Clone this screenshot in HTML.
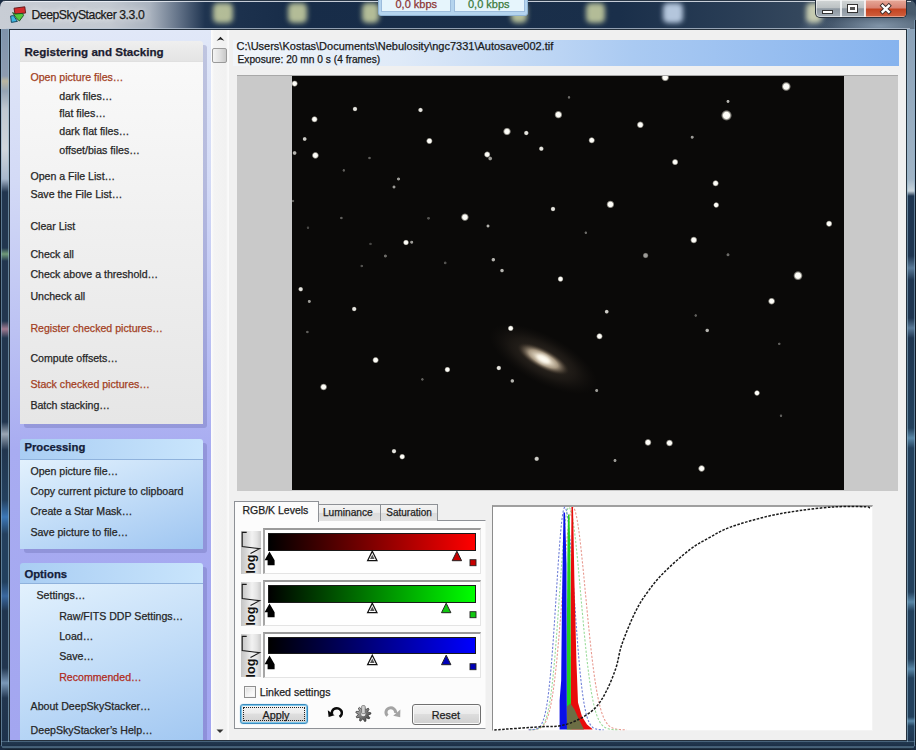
<!DOCTYPE html>
<html><head><meta charset="utf-8">
<style>
*{margin:0;padding:0;box-sizing:border-box}
html,body{width:916px;height:750px;overflow:hidden}
body{position:relative;background:#1b2c44;font-family:"Liberation Sans",sans-serif;font-size:11px;color:#1e1e1e}
.a{position:absolute}
.t{position:absolute;white-space:nowrap;line-height:1;-webkit-text-stroke:0.25px currentColor}
</style></head>
<body>
<div class="a" style="left:0;top:0;width:916px;height:750px;background:#1a2b42"></div>
<div class="a" style="left:9px;top:29px;width:898px;height:712px;background:#f0f0f0;border:1px solid #1f2d3a"></div>
<div class="a" style="left:10px;top:30px;width:201px;height:710px;background:linear-gradient(180deg,#e1e8f8 0,#d3daf6 150px,#bcc2f3 300px,#a8acf1 420px,#a3a6f0 100%)"></div>
<div class="a" style="left:24px;top:45px;width:183px;height:383px;background:rgba(60,60,130,0.2);border-radius:3px"></div>
<div class="a" style="left:20px;top:41px;width:183px;height:20px;background:linear-gradient(180deg,#efefef,#e4e4e4);border-radius:3px 3px 0 0"></div>
<div class="a" style="left:20px;top:61px;width:183px;height:363px;background:linear-gradient(180deg,#f9f9f9 0,#efefef 50%,#e6e6e6 100%);border-top:1px solid #e0e0e0"></div>
<div class="a" style="left:24px;top:443px;width:183px;height:110px;background:rgba(60,60,130,0.2);border-radius:3px"></div>
<div class="a" style="left:20px;top:439px;width:183px;height:20px;background:linear-gradient(90deg,#a9cdf3,#c9e5fc);border-radius:3px 3px 0 0"></div>
<div class="a" style="left:20px;top:459px;width:183px;height:90px;background:linear-gradient(160deg,#e2f1fd 0,#c4def8 45%,#9ec5f1 100%);border-top:1px solid #8fb2dc"></div>
<div class="a" style="left:24px;top:567px;width:183px;height:190px;background:rgba(60,60,130,0.2);border-radius:3px"></div>
<div class="a" style="left:20px;top:563px;width:183px;height:20px;background:linear-gradient(90deg,#a9cdf3,#c9e5fc);border-radius:3px 3px 0 0"></div>
<div class="a" style="left:20px;top:583px;width:183px;height:170px;background:linear-gradient(160deg,#e2f1fd 0,#c4def8 45%,#9ec5f1 100%);border-top:1px solid #8fb2dc"></div>
<div class="a" style="left:9px;top:740px;width:898px;height:1px;background:#1f2d3a"></div>
<div class="t" style="left:24.4px;top:46.08px;font-size:11.6px;font-weight:bold;color:#1c1c30;">Registering and Stacking</div>
<div class="t" style="left:30.4px;top:72.43px;font-size:10.6px;color:#a33f1f;">Open picture files…</div>
<div class="t" style="left:59.3px;top:90.63px;font-size:10.6px;color:#262626;">dark files…</div>
<div class="t" style="left:59.3px;top:108.43px;font-size:10.6px;color:#262626;">flat files…</div>
<div class="t" style="left:59.3px;top:126.43px;font-size:10.6px;color:#262626;">dark flat files…</div>
<div class="t" style="left:59.3px;top:145.03px;font-size:10.6px;color:#262626;">offset/bias files…</div>
<div class="t" style="left:30.4px;top:170.63px;font-size:10.6px;color:#262626;">Open a File List…</div>
<div class="t" style="left:30.4px;top:188.63px;font-size:10.6px;color:#262626;">Save the File List…</div>
<div class="t" style="left:30.4px;top:220.63px;font-size:10.6px;color:#262626;">Clear List</div>
<div class="t" style="left:30.4px;top:249.23px;font-size:10.6px;color:#262626;">Check all</div>
<div class="t" style="left:30.4px;top:268.83px;font-size:10.6px;color:#262626;">Check above a threshold…</div>
<div class="t" style="left:30.4px;top:291.23px;font-size:10.6px;color:#262626;">Uncheck all</div>
<div class="t" style="left:30.4px;top:323.43px;font-size:10.6px;color:#a33f1f;">Register checked pictures…</div>
<div class="t" style="left:30.4px;top:352.83px;font-size:10.6px;color:#262626;">Compute offsets…</div>
<div class="t" style="left:30.4px;top:379.43px;font-size:10.6px;color:#a33f1f;">Stack checked pictures…</div>
<div class="t" style="left:30.4px;top:399.63px;font-size:10.6px;color:#262626;">Batch stacking…</div>
<div class="t" style="left:30.4px;top:465.83px;font-size:10.6px;color:#262626;">Open picture file…</div>
<div class="t" style="left:30.4px;top:486.03px;font-size:10.6px;color:#262626;">Copy current picture to clipboard</div>
<div class="t" style="left:30.4px;top:506.33px;font-size:10.6px;color:#262626;">Create a Star Mask…</div>
<div class="t" style="left:30.4px;top:527.03px;font-size:10.6px;color:#262626;">Save picture to file…</div>
<div class="t" style="left:36.5px;top:589.73px;font-size:10.6px;color:#262626;">Settings…</div>
<div class="t" style="left:59.2px;top:610.63px;font-size:10.6px;color:#262626;">Raw/FITS DDP Settings…</div>
<div class="t" style="left:59.2px;top:630.83px;font-size:10.6px;color:#262626;">Load…</div>
<div class="t" style="left:59.2px;top:651.33px;font-size:10.6px;color:#262626;">Save…</div>
<div class="t" style="left:59.2px;top:671.53px;font-size:10.6px;color:#b02a20;">Recommended…</div>
<div class="t" style="left:30.6px;top:700.83px;font-size:10.6px;color:#262626;">About DeepSkyStacker…</div>
<div class="t" style="left:30.6px;top:725.03px;font-size:10.6px;color:#262626;">DeepSkyStacker’s Help…</div>
<div class="t" style="left:24.4px;top:442.43px;font-size:11.3px;font-weight:bold;color:#14203a;">Processing</div>
<div class="t" style="left:24.4px;top:568.83px;font-size:11.3px;font-weight:bold;color:#14203a;">Options</div>
<div class="a" style="left:211px;top:30px;width:18px;height:710px;background:linear-gradient(90deg,#fdfdfd 0,#f4f4f4 3px,#f1f1f1 15px,#fafafa 17px)"></div>
<svg class="a" style="left:211px;top:30px" width="18" height="710"><path d="M216.6 40.8 L220.5 36.8 L224.4 40.8 L220.5 39.4 Z" transform="translate(-211,-30)" fill="#1e1e1e"/><path d="M216.5 729.5 L220 733 L223.5 729.5 Z" transform="translate(-211,-30)" fill="#333"/></svg>
<div class="a" style="left:212px;top:48px;width:15px;height:15px;border:1px solid #9a9a9a;border-radius:2px;background:linear-gradient(90deg,#f4f4f4 0,#e2e2e2 50%,#c8c8c8 100%)"></div>
<div class="a" style="left:233px;top:40px;width:666px;height:26px;background:linear-gradient(90deg,#f1f5fa 0,#dfeaf8 25%,#aacaf2 60%,#86b3ee 100%)"></div>
<div class="t" style="left:236.6px;top:41.49px;font-size:11px;color:#1a1a1a;">C:\Users\Kostas\Documents\Nebulosity\ngc7331\Autosave002.tif</div>
<div class="t" style="left:237.5px;top:55.07px;font-size:10.2px;color:#1a1a1a;">Exposure: 20 mn 0 s (4 frames)</div>
<div class="a" style="left:237px;top:75px;width:661px;height:416px;background:#c9c9c9;border-top:1px solid #a8a8a8"></div>
<svg class="a" style="left:292px;top:76px" width="552" height="414" viewBox="292 76 552 414">
<defs><radialGradient id="st"><stop offset="0" stop-color="#ffffff"/><stop offset="0.55" stop-color="#fbfaf2"/><stop offset="1" stop-color="#f4f0e4" stop-opacity="0"/></radialGradient>
<radialGradient id="gx"><stop offset="0" stop-color="#fffaf0"/><stop offset="0.2" stop-color="#f0e6d2"/><stop offset="0.55" stop-color="#b4a48c" stop-opacity="0.9"/><stop offset="0.8" stop-color="#5a4e40" stop-opacity="0.6"/><stop offset="1" stop-color="#2a241c" stop-opacity="0"/></radialGradient>
<radialGradient id="gh"><stop offset="0" stop-color="#4a4036" stop-opacity="0.9"/><stop offset="0.6" stop-color="#2a241e" stop-opacity="0.6"/><stop offset="1" stop-color="#1a1612" stop-opacity="0"/></radialGradient>
<filter id="bl" x="-50%" y="-50%" width="200%" height="200%"><feGaussianBlur stdDeviation="1.5"/></filter></defs>
<rect x="292" y="76" width="552" height="414" fill="#0a0908"/>
<g transform="translate(543.3 359) rotate(28)"><ellipse rx="60" ry="24" fill="url(#gh)" opacity="0.9"/><ellipse rx="29" ry="10" fill="url(#gx)"/><ellipse rx="7" ry="4" fill="#fffef8" opacity="0.6" filter="url(#bl)"/></g>
<circle cx="294.6" cy="83.6" r="3.40" fill="url(#st)" opacity="1"/><circle cx="314.5" cy="119.3" r="3.40" fill="url(#st)" opacity="1"/><circle cx="355" cy="109" r="2.67" fill="url(#st)" opacity="0.9"/><circle cx="420.5" cy="110" r="2.67" fill="url(#st)" opacity="0.9"/><circle cx="304.7" cy="139" r="2.38" fill="url(#st)" opacity="0.8"/><circle cx="315.4" cy="155.4" r="3.69" fill="url(#st)" opacity="1"/><circle cx="294.6" cy="153" r="2.38" fill="url(#st)" opacity="0.7"/><circle cx="429.4" cy="141" r="3.40" fill="url(#st)" opacity="1"/><circle cx="507" cy="131.5" r="4.12" fill="url(#st)" opacity="1"/><circle cx="526.3" cy="133" r="2.67" fill="url(#st)" opacity="0.9"/><circle cx="558.4" cy="114.7" r="4.12" fill="url(#st)" opacity="1"/><circle cx="541.3" cy="148.7" r="2.67" fill="url(#st)" opacity="0.9"/><circle cx="487.2" cy="154.5" r="3.40" fill="url(#st)" opacity="1"/><circle cx="490.2" cy="158.5" r="2.38" fill="url(#st)" opacity="0.6"/><circle cx="398.5" cy="179" r="1.95" fill="url(#st)" opacity="0.6"/><circle cx="394" cy="187" r="1.95" fill="url(#st)" opacity="0.6"/><circle cx="369.5" cy="158" r="1.66" fill="url(#st)" opacity="0.35"/><circle cx="343.8" cy="170.4" r="1.66" fill="url(#st)" opacity="0.35"/><circle cx="464.9" cy="217.2" r="4.12" fill="url(#st)" opacity="1"/><circle cx="553" cy="209" r="2.67" fill="url(#st)" opacity="0.9"/><circle cx="488" cy="226" r="1.95" fill="url(#st)" opacity="0.7"/><circle cx="406" cy="242.5" r="3.11" fill="url(#st)" opacity="1"/><circle cx="411.7" cy="242.2" r="1.95" fill="url(#st)" opacity="0.6"/><circle cx="385.4" cy="256" r="1.95" fill="url(#st)" opacity="0.4"/><circle cx="493.3" cy="259.7" r="2.24" fill="url(#st)" opacity="0.7"/><circle cx="502" cy="270.6" r="2.24" fill="url(#st)" opacity="0.7"/><circle cx="560.5" cy="279" r="3.11" fill="url(#st)" opacity="1"/><circle cx="341.4" cy="218" r="1.66" fill="url(#st)" opacity="0.35"/><circle cx="293" cy="201" r="1.66" fill="url(#st)" opacity="0.35"/><circle cx="665.2" cy="77.5" r="4.12" fill="url(#st)" opacity="1"/><circle cx="786.2" cy="86.5" r="4.85" fill="url(#st)" opacity="1"/><circle cx="728" cy="101.4" r="1.95" fill="url(#st)" opacity="0.7"/><circle cx="726.5" cy="115.4" r="5.58" fill="url(#st)" opacity="1"/><circle cx="640.3" cy="124.8" r="3.69" fill="url(#st)" opacity="1"/><circle cx="591.7" cy="140.3" r="3.40" fill="url(#st)" opacity="1"/><circle cx="692.2" cy="137.2" r="1.95" fill="url(#st)" opacity="0.6"/><circle cx="675.1" cy="162.1" r="3.40" fill="url(#st)" opacity="1"/><circle cx="715.6" cy="183.3" r="3.40" fill="url(#st)" opacity="1"/><circle cx="716.2" cy="205" r="3.11" fill="url(#st)" opacity="1"/><circle cx="610.4" cy="204.4" r="4.12" fill="url(#st)" opacity="1"/><circle cx="829.1" cy="223.7" r="3.40" fill="url(#st)" opacity="1"/><circle cx="693.8" cy="240" r="3.69" fill="url(#st)" opacity="1"/><circle cx="645.6" cy="255.5" r="3.11" fill="url(#st)" opacity="0.6"/><circle cx="728" cy="254.8" r="1.95" fill="url(#st)" opacity="0.4"/><circle cx="798" cy="275.7" r="4.85" fill="url(#st)" opacity="1"/><circle cx="585.8" cy="232.7" r="1.66" fill="url(#st)" opacity="0.4"/><circle cx="569" cy="97.4" r="1.66" fill="url(#st)" opacity="0.4"/><circle cx="300.7" cy="289.2" r="2.67" fill="url(#st)" opacity="0.9"/><circle cx="309.3" cy="301.4" r="1.95" fill="url(#st)" opacity="0.6"/><circle cx="354.2" cy="309" r="2.67" fill="url(#st)" opacity="0.9"/><circle cx="307.4" cy="332" r="1.66" fill="url(#st)" opacity="0.35"/><circle cx="375.6" cy="360.1" r="3.40" fill="url(#st)" opacity="1"/><circle cx="323.6" cy="387" r="3.69" fill="url(#st)" opacity="1"/><circle cx="447.4" cy="369.6" r="3.11" fill="url(#st)" opacity="1"/><circle cx="422.4" cy="379.4" r="1.66" fill="url(#st)" opacity="0.35"/><circle cx="510.7" cy="328.3" r="3.11" fill="url(#st)" opacity="1"/><circle cx="498.8" cy="368" r="2.67" fill="url(#st)" opacity="0.9"/><circle cx="512.3" cy="380.9" r="2.24" fill="url(#st)" opacity="0.7"/><circle cx="394" cy="451.2" r="2.67" fill="url(#st)" opacity="0.9"/><circle cx="402.2" cy="456.7" r="3.11" fill="url(#st)" opacity="1"/><circle cx="536.7" cy="458.8" r="2.67" fill="url(#st)" opacity="0.8"/><circle cx="771.6" cy="301.2" r="3.69" fill="url(#st)" opacity="1"/><circle cx="606.7" cy="311.7" r="2.38" fill="url(#st)" opacity="0.8"/><circle cx="599.5" cy="336.3" r="3.40" fill="url(#st)" opacity="1"/><circle cx="707.2" cy="330.4" r="2.24" fill="url(#st)" opacity="0.7"/><circle cx="757" cy="393" r="3.11" fill="url(#st)" opacity="1"/><circle cx="596.7" cy="390.5" r="1.95" fill="url(#st)" opacity="0.6"/><circle cx="648" cy="442.4" r="3.69" fill="url(#st)" opacity="1"/><circle cx="669.5" cy="443" r="3.69" fill="url(#st)" opacity="1"/><circle cx="701.6" cy="468.5" r="3.69" fill="url(#st)" opacity="1"/><circle cx="615" cy="460.5" r="1.95" fill="url(#st)" opacity="0.6"/><circle cx="781" cy="415.7" r="1.66" fill="url(#st)" opacity="0.35"/><circle cx="779.3" cy="343.8" r="1.66" fill="url(#st)" opacity="0.35"/><circle cx="695.7" cy="315.5" r="1.66" fill="url(#st)" opacity="0.35"/><circle cx="428.5" cy="218.3" r="1.80" fill="url(#st)" opacity="0.3"/><circle cx="445.2" cy="262.9" r="1.80" fill="url(#st)" opacity="0.3"/><circle cx="361.7" cy="266" r="1.66" fill="url(#st)" opacity="0.3"/><circle cx="308" cy="227.7" r="1.66" fill="url(#st)" opacity="0.25"/><circle cx="370.5" cy="243.9" r="1.66" fill="url(#st)" opacity="0.25"/>
</svg>
<div class="a" style="left:234px;top:520px;width:252px;height:209px;background:#fcfcfc;border:1px solid #8e9196;border-right-color:#f6f6f6"></div>
<div class="a" style="left:318px;top:503.5px;width:63px;height:17px;background:linear-gradient(180deg,#f4f4f4 0,#ebebeb 50%,#dcdcdc 51%,#e2e2e2 100%);border:1px solid #8e9196;border-bottom:none"></div>
<div class="a" style="left:380px;top:503.5px;width:57.5px;height:17px;background:linear-gradient(180deg,#f4f4f4 0,#ebebeb 50%,#dcdcdc 51%,#e2e2e2 100%);border:1px solid #8e9196;border-bottom:none"></div>
<div class="a" style="left:234px;top:501px;width:85px;height:21px;background:#fcfcfc;border:1px solid #8e9196;border-bottom:none"></div>
<div class="t" style="left:242.4px;top:505.31px;font-size:10.5px;color:#1e1e1e;">RGB/K Levels</div>
<div class="t" style="left:322.9px;top:508.17px;font-size:10.2px;color:#1e1e1e;">Luminance</div>
<div class="t" style="left:386.3px;top:508.33px;font-size:10.0px;color:#1e1e1e;">Saturation</div>
<div class="a" style="left:241px;top:530.5px;width:20px;height:43.5px;background:linear-gradient(90deg,#c4c4c4 0,#d6d6d6 25%,#f2f2f2 55%,#e2e2e2 80%,#c8c8c8 100%)"></div>
<svg class="a" style="left:236px;top:526.2px" width="30" height="52" viewBox="236 526.2 30 52"><path d="M246.7 532.6 L242.2 532.6 L242.2 546.8 L259.6 548.9 L250.5 553.7" fill="none" stroke="#1a1a1a" stroke-width="1.1"/><text transform="translate(254.6 573.6) rotate(-90)" font-family="Liberation Sans" font-weight="bold" font-size="12.6" fill="#111">log</text></svg>
<div class="a" style="left:262.5px;top:528.2px;width:218.5px;height:46.3px;background:#fff;border-top:2px solid #9a9a9a;border-left:2px solid #a6a6a6;border-right:1px solid #e4e4e4;border-bottom:1px solid #e4e4e4"></div>
<div class="a" style="left:268px;top:533.3px;width:208.2px;height:17.5px;background:linear-gradient(90deg,#000 0,#ff0000 100%);border:1px solid #1a1a1a"></div>
<svg class="a" style="left:262px;top:528.2px" width="220" height="46" viewBox="262 528.2 220 46"><path d="M269.5 551.7 L274.6 560.5 L274.6 565.5 L267.6 565.5 L267.6 560.5 L264.6 560.5 Z" fill="#000"/><path d="M372.3 551.4 L377 560.9 L367.6 560.9 Z" fill="#fff" stroke="#111" stroke-width="1.2"/><path d="M372.3 554.7 L374.6 559.1 L370 559.1 Z" fill="#555"/><path d="M456.9 551.4 L461.59999999999997 560.9 L452.2 560.9 Z" fill="#c80000" stroke="#222" stroke-width="1"/><rect x="470" y="559.9" width="6" height="6" fill="#c80000" stroke="#222" stroke-width="0.9"/></svg>
<div class="a" style="left:241px;top:582.2px;width:20px;height:43.5px;background:linear-gradient(90deg,#c4c4c4 0,#d6d6d6 25%,#f2f2f2 55%,#e2e2e2 80%,#c8c8c8 100%)"></div>
<svg class="a" style="left:236px;top:577.9px" width="30" height="52" viewBox="236 577.9 30 52"><path d="M246.7 584.3 L242.2 584.3 L242.2 598.5 L259.6 600.6 L250.5 605.4" fill="none" stroke="#1a1a1a" stroke-width="1.1"/><text transform="translate(254.6 625.3) rotate(-90)" font-family="Liberation Sans" font-weight="bold" font-size="12.6" fill="#111">log</text></svg>
<div class="a" style="left:262.5px;top:579.9px;width:218.5px;height:46.3px;background:#fff;border-top:2px solid #9a9a9a;border-left:2px solid #a6a6a6;border-right:1px solid #e4e4e4;border-bottom:1px solid #e4e4e4"></div>
<div class="a" style="left:268px;top:585.0px;width:208.2px;height:17.5px;background:linear-gradient(90deg,#000 0,#00ff00 100%);border:1px solid #1a1a1a"></div>
<svg class="a" style="left:262px;top:579.9px" width="220" height="46" viewBox="262 579.9 220 46"><path d="M269.5 603.4 L274.6 612.2 L274.6 617.2 L267.6 617.2 L267.6 612.2 L264.6 612.2 Z" fill="#000"/><path d="M372.3 603.1 L377 612.6 L367.6 612.6 Z" fill="#fff" stroke="#111" stroke-width="1.2"/><path d="M372.3 606.4 L374.6 610.8 L370 610.8 Z" fill="#555"/><path d="M446.2 603.1 L450.9 612.6 L441.5 612.6 Z" fill="#10c810" stroke="#222" stroke-width="1"/><rect x="470" y="611.6" width="6" height="6" fill="#10c810" stroke="#222" stroke-width="0.9"/></svg>
<div class="a" style="left:241px;top:633.9px;width:20px;height:43.5px;background:linear-gradient(90deg,#c4c4c4 0,#d6d6d6 25%,#f2f2f2 55%,#e2e2e2 80%,#c8c8c8 100%)"></div>
<svg class="a" style="left:236px;top:629.6px" width="30" height="52" viewBox="236 629.6 30 52"><path d="M246.7 636.0 L242.2 636.0 L242.2 650.2 L259.6 652.3 L250.5 657.1" fill="none" stroke="#1a1a1a" stroke-width="1.1"/><text transform="translate(254.6 677.0) rotate(-90)" font-family="Liberation Sans" font-weight="bold" font-size="12.6" fill="#111">log</text></svg>
<div class="a" style="left:262.5px;top:631.6px;width:218.5px;height:46.3px;background:#fff;border-top:2px solid #9a9a9a;border-left:2px solid #a6a6a6;border-right:1px solid #e4e4e4;border-bottom:1px solid #e4e4e4"></div>
<div class="a" style="left:268px;top:636.7px;width:208.2px;height:17.5px;background:linear-gradient(90deg,#000 0,#0000ff 100%);border:1px solid #1a1a1a"></div>
<svg class="a" style="left:262px;top:631.6px" width="220" height="46" viewBox="262 631.6 220 46"><path d="M269.5 655.1 L274.6 663.9 L274.6 668.9 L267.6 668.9 L267.6 663.9 L264.6 663.9 Z" fill="#000"/><path d="M372.3 654.8 L377 664.3 L367.6 664.3 Z" fill="#fff" stroke="#111" stroke-width="1.2"/><path d="M372.3 658.1 L374.6 662.5 L370 662.5 Z" fill="#555"/><path d="M446.2 654.8 L450.9 664.3 L441.5 664.3 Z" fill="#0000b8" stroke="#222" stroke-width="1"/><rect x="470" y="663.3" width="6" height="6" fill="#0000b8" stroke="#222" stroke-width="0.9"/></svg>
<div class="a" style="left:243.5px;top:685.8px;width:12.5px;height:12.5px;border:1px solid #8f8f8f;background:linear-gradient(135deg,#dcdcdc 0,#f6f6f6 60%,#ffffff 100%);box-shadow:inset 0 0 0 1px #f4f4f4"></div>
<div class="t" style="left:259.8px;top:686.93px;font-size:10.6px;color:#1e1e1e;">Linked settings</div>
<div class="a" style="left:240px;top:704.4px;width:68px;height:20px;border:1px solid #3a8cbf;border-radius:3px;background:linear-gradient(180deg,#f4f4f4 0,#ececec 45%,#dedede 50%,#d2d2d2 100%);box-shadow:inset 0 0 0 1px #7cc6ea,0 0 1px #5ab0e0"></div>
<div class="a" style="left:243px;top:707.4px;width:62px;height:14px;border:1px dotted #202020"></div>
<div class="t" style="left:262.5px;top:709.66px;font-size:10.8px;color:#1e1e1e;">Apply</div>
<div class="a" style="left:411.5px;top:704.4px;width:69px;height:20.3px;border:1px solid #707070;border-radius:3px;background:linear-gradient(180deg,#f2f2f2 0,#ebebeb 45%,#dddddd 50%,#cfcfcf 100%);box-shadow:inset 0 0 0 1px #fafafa"></div>
<div class="t" style="left:431.8px;top:709.66px;font-size:10.8px;color:#1e1e1e;">Reset</div>
<svg class="a" style="left:322px;top:700px" width="84" height="28" viewBox="322 700 84 28"><path d="M332 714 A5 4.6 0 1 1 339.5 716.8" fill="none" stroke="#0a0a0a" stroke-width="2.6"/><path d="M327.8 710.2 L328.6 717 L334.6 715.2 Z" fill="#0a0a0a"/><defs><linearGradient id="gg" x1="0" y1="0" x2="1" y2="1"><stop offset="0" stop-color="#c8c8c8"/><stop offset="0.5" stop-color="#7a7a7a"/><stop offset="1" stop-color="#3a3a3a"/></linearGradient></defs><path d="M363.30,706.40 L364.62,706.52 L365.08,709.11 L365.90,709.50 L368.19,708.18 L369.12,709.11 L367.80,711.40 L368.19,712.22 L370.78,712.68 L370.90,714.00 L368.42,714.90 L368.19,715.78 L369.88,717.80 L369.12,718.89 L366.64,717.98 L365.90,718.50 L365.90,721.14 L364.62,721.48 L363.30,719.20 L362.40,719.12 L360.70,721.14 L359.50,720.58 L359.96,717.98 L359.32,717.34 L356.72,717.80 L356.16,716.60 L358.18,714.90 L358.10,714.00 L355.82,712.68 L356.16,711.40 L358.80,711.40 L359.32,710.66 L358.41,708.18 L359.50,707.42 L361.52,709.11 L362.40,708.88 Z" fill="url(#gg)" stroke="#2a2a2a" stroke-width="0.7"/><circle cx="363.3" cy="714" r="2.2" fill="#e8e8e8"/><rect x="361.6" y="705.6" width="3.6" height="8" rx="1" fill="#d0d0d0" stroke="#555" stroke-width="0.6"/><path d="M387.6 715.6 A4.8 4.4 0 1 1 395.5 713" fill="none" stroke="#a4a4a4" stroke-width="3"/><path d="M400.4 709.6 L400.2 717.2 L393.2 715.8 Z" fill="#a4a4a4"/></svg>
<div class="a" style="left:492px;top:504.5px;width:381px;height:226.0px;background:#fff;border-top:2px solid #a0a0a0;border-left:1.5px solid #8c8c8c;border-right:1px solid #f4f4f4;border-bottom:1px solid #f4f4f4"></div>
<svg class="a" style="left:492px;top:504.5px" width="381" height="226.0" viewBox="492 504.5 381 226.0">
<path d="M528.7,729.3 L529.3,729.3 L529.9,729.2 L530.5,729.2 L531.1,729.2 L531.7,729.2 L532.3,729.2 L532.9,729.1 L533.5,729.1 L534.1,729.1 L534.7,729.0 L535.3,728.9 L535.9,728.8 L536.5,728.7 L537.1,728.6 L537.7,728.5 L538.3,728.3 L538.9,728.1 L539.5,727.8 L540.1,727.6 L540.7,727.2 L541.3,726.8 L541.9,726.4 L542.5,725.8 L543.1,725.2 L543.7,724.5 L544.3,723.7 L544.9,722.8 L545.5,721.7 L546.1,720.5 L546.7,719.2 L547.3,717.6 L547.9,715.9 L548.5,714.0 L549.1,711.9 L549.7,709.5 L550.3,706.9 L550.9,704.0 L551.5,700.9 L552.1,697.4 L552.7,693.7 L553.3,689.6 L553.9,685.3 L554.5,680.6 L555.1,675.6 L555.7,670.2 L556.3,664.6 L556.9,658.6 L557.5,652.3 L558.1,645.8 L558.7,639.0 L559.3,631.9 L559.9,624.7 L560.5,617.3 L561.1,609.7 L561.7,602.1 L562.3,594.3 L562.9,586.6 L563.5,579.0 L564.1,571.4 L564.7,564.1 L565.3,556.9 L565.9,550.0 L566.5,543.5 L567.1,537.3 L567.7,531.6 L568.3,526.3 L568.9,521.6 L569.5,517.5 L570.1,514.0 L570.7,511.2 L571.3,509.1 L571.9,507.6 L572.5,506.9 L573.1,506.9 L573.7,507.3 L574.3,508.3 L574.9,509.8 L575.5,511.7 L576.1,514.1 L576.7,516.9 L577.3,520.1 L577.9,523.8 L578.5,527.8 L579.1,532.2 L579.7,536.9 L580.3,541.9 L580.9,547.2 L581.5,552.7 L582.1,558.4 L582.7,564.3 L583.3,570.4 L583.9,576.5 L584.5,582.8 L585.1,589.1 L585.7,595.4 L586.3,601.7 L586.9,608.0 L587.5,614.2 L588.1,620.4 L588.7,626.4 L589.3,632.4 L589.9,638.1 L590.5,643.8 L591.1,649.2 L591.7,654.5 L592.3,659.6 L592.9,664.5 L593.5,669.1 L594.1,673.6 L594.7,677.8 L595.3,681.8 L595.9,685.6 L596.5,689.2 L597.1,692.6 L597.7,695.8 L598.3,698.7 L598.9,701.5 L599.5,704.0 L600.1,706.4 L600.7,708.6 L601.3,710.6 L601.9,712.5 L602.5,714.2 L603.1,715.8 L603.7,717.2 L604.3,718.5 L604.9,719.7 L605.5,720.8 L606.1,721.8 L606.7,722.6 L607.3,723.4 L607.9,724.1 L608.5,724.7 L609.1,725.3 L609.7,725.8 L610.3,726.3 L610.9,726.6 L611.5,727.0 L612.1,727.3 L612.7,727.6 L613.3,727.8 L613.9,728.0 L614.5,728.2 L615.1,728.4 L615.7,728.5 L616.3,728.6 L616.9,728.7 L617.5,728.8 L618.1,728.9 L618.7,728.9 L619.3,729.0 L619.9,729.0 L620.5,729.1 L621.1,729.1 L621.7,729.1 L622.3,729.2 L622.9,729.2 L623.5,729.2 L624.1,729.2 L624.7,729.2 L625.3,729.3 L625.9,729.3 L626.5,729.3" fill="none" stroke="#e89a90" stroke-width="1.1" stroke-dasharray="2.2,1.6"/>
<path d="M529.7,729.3 L530.3,729.3 L530.9,729.2 L531.5,729.2 L532.1,729.2 L532.7,729.2 L533.3,729.1 L533.9,729.1 L534.5,729.0 L535.1,729.0 L535.7,728.9 L536.3,728.8 L536.9,728.7 L537.5,728.5 L538.1,728.3 L538.7,728.1 L539.3,727.8 L539.9,727.5 L540.5,727.1 L541.1,726.6 L541.7,726.1 L542.3,725.4 L542.9,724.6 L543.5,723.7 L544.1,722.7 L544.7,721.5 L545.3,720.1 L545.9,718.5 L546.5,716.6 L547.1,714.5 L547.7,712.2 L548.3,709.5 L548.9,706.5 L549.5,703.2 L550.1,699.6 L550.7,695.5 L551.3,691.1 L551.9,686.3 L552.5,681.0 L553.1,675.4 L553.7,669.3 L554.3,662.9 L554.9,656.0 L555.5,648.8 L556.1,641.2 L556.7,633.3 L557.3,625.2 L557.9,616.8 L558.5,608.2 L559.1,599.6 L559.7,590.9 L560.3,582.2 L560.9,573.6 L561.5,565.2 L562.1,557.1 L562.7,549.4 L563.3,542.0 L563.9,535.2 L564.5,529.0 L565.1,523.4 L565.7,518.5 L566.3,514.4 L566.9,511.2 L567.5,508.8 L568.1,507.4 L568.7,506.8 L569.3,507.0 L569.9,507.8 L570.5,509.1 L571.1,511.0 L571.7,513.4 L572.3,516.3 L572.9,519.7 L573.5,523.5 L574.1,527.8 L574.7,532.5 L575.3,537.5 L575.9,542.9 L576.5,548.6 L577.1,554.5 L577.7,560.7 L578.3,567.1 L578.9,573.6 L579.5,580.2 L580.1,586.9 L580.7,593.7 L581.3,600.4 L581.9,607.1 L582.5,613.8 L583.1,620.3 L583.7,626.8 L584.3,633.1 L584.9,639.2 L585.5,645.2 L586.1,651.0 L586.7,656.5 L587.3,661.8 L587.9,666.9 L588.5,671.8 L589.1,676.4 L589.7,680.8 L590.3,684.9 L590.9,688.7 L591.5,692.4 L592.1,695.7 L592.7,698.9 L593.3,701.8 L593.9,704.5 L594.5,707.0 L595.1,709.3 L595.7,711.4 L596.3,713.3 L596.9,715.1 L597.5,716.7 L598.1,718.1 L598.7,719.4 L599.3,720.6 L599.9,721.6 L600.5,722.6 L601.1,723.4 L601.7,724.2 L602.3,724.8 L602.9,725.4 L603.5,725.9 L604.1,726.4 L604.7,726.8 L605.3,727.1 L605.9,727.4 L606.5,727.7 L607.1,727.9 L607.7,728.1 L608.3,728.3 L608.9,728.5 L609.5,728.6 L610.1,728.7 L610.7,728.8 L611.3,728.9 L611.9,729.0 L612.5,729.0 L613.1,729.1 L613.7,729.1 L614.3,729.1 L614.9,729.2 L615.5,729.2 L616.1,729.2 L616.7,729.2 L617.3,729.2 L617.9,729.2 L618.5,729.3 L619.1,729.3" fill="none" stroke="#9adc9a" stroke-width="1.1" stroke-dasharray="2.2,1.6"/>
<path d="M528.7,729.3 L529.3,729.3 L529.9,729.2 L530.5,729.2 L531.1,729.2 L531.7,729.2 L532.3,729.1 L532.9,729.1 L533.5,729.0 L534.1,728.9 L534.7,728.8 L535.3,728.7 L535.9,728.5 L536.5,728.3 L537.1,728.1 L537.7,727.8 L538.3,727.4 L538.9,726.9 L539.5,726.4 L540.1,725.7 L540.7,724.9 L541.3,724.0 L541.9,722.9 L542.5,721.6 L543.1,720.1 L543.7,718.4 L544.3,716.4 L544.9,714.1 L545.5,711.5 L546.1,708.5 L546.7,705.1 L547.3,701.4 L547.9,697.2 L548.5,692.5 L549.1,687.4 L549.7,681.9 L550.3,675.8 L550.9,669.3 L551.5,662.2 L552.1,654.8 L552.7,646.9 L553.3,638.6 L553.9,629.9 L554.5,621.0 L555.1,611.8 L555.7,602.5 L556.3,593.1 L556.9,583.7 L557.5,574.4 L558.1,565.3 L558.7,556.6 L559.3,548.2 L559.9,540.4 L560.5,533.2 L561.1,526.7 L561.7,521.0 L562.3,516.2 L562.9,512.3 L563.5,509.4 L564.1,507.6 L564.7,506.8 L565.3,507.1 L565.9,508.3 L566.5,510.4 L567.1,513.4 L567.7,517.2 L568.3,521.8 L568.9,527.2 L569.5,533.3 L570.1,539.9 L570.7,547.1 L571.3,554.8 L571.9,562.8 L572.5,571.1 L573.1,579.6 L573.7,588.3 L574.3,597.0 L574.9,605.6 L575.5,614.2 L576.1,622.7 L576.7,630.9 L577.3,638.9 L577.9,646.5 L578.5,653.9 L579.1,660.9 L579.7,667.4 L580.3,673.6 L580.9,679.4 L581.5,684.8 L582.1,689.7 L582.7,694.3 L583.3,698.4 L583.9,702.2 L584.5,705.6 L585.1,708.7 L585.7,711.4 L586.3,713.8 L586.9,716.0 L587.5,717.9 L588.1,719.6 L588.7,721.1 L589.3,722.3 L589.9,723.4 L590.5,724.4 L591.1,725.2 L591.7,725.9 L592.3,726.5 L592.9,727.0 L593.5,727.4 L594.1,727.7 L594.7,728.0 L595.3,728.3 L595.9,728.5 L596.5,728.6 L597.1,728.8 L597.7,728.9 L598.3,729.0 L598.9,729.0 L599.5,729.1 L600.1,729.1 L600.7,729.2 L601.3,729.2 L601.9,729.2 L602.5,729.2 L603.1,729.3 L603.7,729.3" fill="none" stroke="#7080d8" stroke-width="1.1" stroke-dasharray="2.2,1.6"/>
<path d="M571.5,506.5 L573,506.5 L573.5,530 L574.4,580 L576.4,660 L578,702 L582,716 L587,724 L592.4,728.5 L592.4,729 L570.7,729 L570.7,600 L571.2,540 Z" fill="#e80c0c"/>
<path d="M568,514 L569.5,514 L570.5,560 L571,729 L566.8,729 L566.8,640 L567.5,540 Z" fill="#22d022"/>
<path d="M563.5,512 L565,512 L565.5,528 L566.5,564 L566.8,700 L567,729 L559.6,729 L559.6,700 L561.2,680 L562,600 L563,540 Z" fill="#0a10e8"/>
<path d="M566.9,729 L566.9,706 L570.5,703 L574.5,709 L579,719 L584,729 Z" fill="#6c6e44"/>
<path d="M494.3,729.4 C502.2,728.9 530.9,726.9 541.9,726.2 C552.9,725.5 554.1,726.4 560,725.3 C565.9,724.2 571.6,722.4 577.4,719.5 C583.2,716.6 590.0,712.7 594.8,707.9 C599.6,703.1 602.9,697.3 606.4,690.5 C609.9,683.7 613.4,675.0 616,667.3 C618.6,659.6 618.6,653.4 621.8,644.1 C625.0,634.8 631.0,620.1 635.4,611.3 C639.8,602.4 643.2,597.6 648,591 C652.8,584.4 657.1,578.8 664.1,571.8 C671.1,564.8 682.2,555.0 689.7,549.2 C697.2,543.4 702.5,541.0 709.3,537.2 C716.1,533.4 720.9,530.1 730.4,526.6 C739.9,523.1 755.0,518.9 766.5,516.1 C778.0,513.4 788.2,511.7 799.7,510.1 C811.2,508.5 824.8,506.9 835.8,506.3 C846.8,505.7 860.5,506.0 866,506.3 C871.5,506.6 868.5,507.7 869,508" fill="none" stroke="#1a1a1a" stroke-width="1.5" stroke-dasharray="2.6,1.4"/>
</svg>
<div class="a" style="left:0;top:0;width:916px;height:29px;border-radius:7px 7px 0 0;background:radial-gradient(ellipse 60px 14px at 880px 26px,rgba(150,170,190,0.75) 0,rgba(120,140,165,0) 100%),linear-gradient(115deg,rgba(0,0,0,0) 0,rgba(0,0,0,0) 735px,rgba(120,140,165,0.25) 745px,rgba(0,0,0,0) 765px),linear-gradient(90deg,#c8cdd5 0,#c3c9d1 110px,#aab3bf 150px,#5f6f85 180px,#1f3450 205px,#172c48 300px,#1a2f4a 620px,#2a3e56 740px,#3c4e62 850px,#485a6c 100%)"></div>
<div class="a" style="left:213px;top:3px;width:20px;height:20px;background:#c4cca0;border-radius:5px;filter:blur(2.6px);opacity:0.9"></div>
<div class="a" style="left:288px;top:3px;width:19px;height:20px;background:#c4cca0;border-radius:5px;filter:blur(2.6px);opacity:0.9"></div>
<div class="a" style="left:362px;top:3px;width:17px;height:20px;background:#c4cca0;border-radius:5px;filter:blur(2.6px);opacity:0.9"></div>
<div class="a" style="left:511px;top:3px;width:16px;height:20px;background:#c4cca0;border-radius:5px;filter:blur(2.6px);opacity:0.9"></div>
<div class="a" style="left:586px;top:3px;width:19px;height:20px;background:#c4cca0;border-radius:5px;filter:blur(2.6px);opacity:0.9"></div>
<div class="a" style="left:663px;top:3px;width:20px;height:20px;background:#c4d6ec;border-radius:5px;filter:blur(2.6px);opacity:0.9"></div>
<div class="a" style="left:806px;top:3px;width:16px;height:20px;background:#d4d8b8;border-radius:5px;filter:blur(2.6px);opacity:0.9"></div>
<div class="a" style="left:3px;top:0;width:910px;height:1px;background:#2a3848"></div>
<div class="a" style="left:5px;top:1px;width:906px;height:1.2px;background:rgba(240,244,250,0.8)"></div>
<div class="a" style="left:6px;top:27.5px;width:904px;height:1.5px;background:rgba(185,198,212,0.75)"></div>
<div class="a" style="left:0;top:29px;width:9px;height:712px;background:linear-gradient(180deg,#7f93ab 0px,#8e9cb0 47px,#bab6a0 52px,#95a4b4 62px,#c0c8d0 80px,#d0d6dc 120px,#a8b8cc 150px,#22364f 163px,#22364f 219px,#6f9a78 225px,#22364f 232px,#22364f 292px,#a07a90 300px,#22364f 309px,#22364f 393px,#9aa6b4 405px,#22364f 421px,#24405e 471px,#3c78b8 488px,#24405e 505px,#22405e 553px,#3a68a0 567px,#20354f 582px,#22364f 639px,#7a98b8 654px,#22364f 669px,#1e324c 712px)"></div>
<div class="a" style="left:907px;top:29px;width:9px;height:712px;background:linear-gradient(180deg,#8ca2b8 0px,#a0b4c6 150px,#c8d4dc 162px,#1e3550 167px,#1e3550 227px,#5a7a98 239px,#1e3550 251px,#1e3550 289px,#5a7a98 299px,#1e3550 309px,#22405c 399px,#5a88a8 409px,#22405c 419px,#22405c 563px,#5a88a8 573px,#22405c 582px,#22405c 630px,#5a88a8 640px,#22405c 649px,#22405c 688px,#5a88a8 692px,#22405c 697px,#1e3550 712px)"></div>
<div class="a" style="left:0;top:741px;width:916px;height:9px;background:linear-gradient(180deg,#6d8ea6 0,#22384f 1px,#1b2f46 5px,#6a8ca4 6px,#24384c 7px,#0f1a26 100%);border-radius:0 0 8px 8px"></div>
<div class="a" style="left:0;top:29px;width:1px;height:716px;background:#0f1a26"></div>
<div class="a" style="left:1px;top:29px;width:1px;height:717px;background:rgba(140,175,200,0.55)"></div>
<div class="a" style="left:8px;top:29px;width:1px;height:713px;background:rgba(150,185,205,0.6)"></div>
<div class="a" style="left:907px;top:29px;width:1px;height:713px;background:rgba(150,185,205,0.6)"></div>
<div class="a" style="left:914px;top:20px;width:1px;height:726px;background:rgba(140,175,200,0.55)"></div>
<div class="a" style="left:915px;top:20px;width:1px;height:725px;background:#0f1a26"></div>
<div class="a" style="left:9px;top:29px;width:898px;height:1px;background:#25313d"></div>
<div class="a" style="left:9px;top:740px;width:898px;height:1px;background:#25313d"></div>
<div class="a" style="left:9px;top:29px;width:1px;height:712px;background:#25313d"></div>
<div class="a" style="left:906px;top:29px;width:1px;height:712px;background:#25313d"></div>
<svg class="a" style="left:0;top:0" width="32" height="28" viewBox="0 0 32 28">
<path d="M14 8.2 L24.8 6.8 L25.6 13 L15 14.2 Z" fill="#d22c2c" stroke="#5a1414" stroke-width="0.9"/>
<path d="M12.6 12.6 L15.2 14 L22.6 13.4 L23.6 15.4 L19.4 21 L15.8 17.5 Z" fill="#54c83e" stroke="#1c4e1c" stroke-width="0.9"/>
<path d="M10.6 16 L13.6 15.6 L17.4 21.4 L11.4 22.4 Z" fill="#3cb6e2" stroke="#123e52" stroke-width="0.9"/>
</svg>
<div class="t" style="left:31.4px;top:8.6px;font-size:12.2px;color:#1a1a1a;text-shadow:0 0 6px rgba(255,255,255,0.8),0 0 10px rgba(255,255,255,0.6);letter-spacing:-0.42px">DeepSkyStacker 3.3.0</div>
<div class="a" style="left:378px;top:-1px;width:150px;height:16.5px;background:#b4d4ee;border:1px solid #90b4d4;border-radius:0 0 3px 3px"></div>
<div class="a" style="left:381px;top:0;width:70px;height:11.5px;background:#e6f5fc;border:1px solid #9cbcdc;border-top:none"></div>
<div class="a" style="left:454px;top:0;width:71px;height:11.5px;background:#e6f5fc;border:1px solid #9cbcdc;border-top:none"></div>
<div class="t" style="left:395.5px;top:-1.2px;font-size:11px;color:#8c3434">0,0 kbps</div>
<div class="t" style="left:468px;top:-1.2px;font-size:11px;color:#3a7a3a">0,0 kbps</div>
<div class="a" style="left:815px;top:0;width:92px;height:18px;border:1px solid #27313c;border-top:none;border-radius:0 0 5px 5px;overflow:hidden;background:linear-gradient(180deg,#d2d6d6 0,#bcc2c4 45%,#8d97a0 52%,#a3adb6 100%);box-shadow:inset 0 0 0 1px rgba(255,255,255,0.55)">
<div class="a" style="left:48px;top:0;width:43px;height:17px;background:linear-gradient(180deg,#e6a898 0,#d98474 45%,#c44422 55%,#d0603e 100%);box-shadow:inset 0 0 0 1px rgba(255,220,210,0.5)"></div>
<div class="a" style="left:24px;top:0;width:1.5px;height:17px;background:rgba(245,248,250,0.85)"></div>
<div class="a" style="left:48px;top:0;width:1.5px;height:17px;background:rgba(245,248,250,0.85)"></div>
</div>
<div class="a" style="left:822px;top:9.5px;width:11px;height:4px;background:#fff;border:1px solid #333"></div>
<div class="a" style="left:847px;top:4.3px;width:11px;height:9px;background:#fff;border:1px solid #333"></div>
<div class="a" style="left:850px;top:7.2px;width:5px;height:3.3px;background:#555"></div>
<svg class="a" style="left:878px;top:2px" width="15" height="14"><path d="M4.6 3.8 L10.8 9.8 M10.8 3.8 L4.6 9.8" stroke="#3a2a28" stroke-width="4.2" stroke-linecap="square"/><path d="M4.6 3.8 L10.8 9.8 M10.8 3.8 L4.6 9.8" stroke="#fff" stroke-width="2.4" stroke-linecap="square"/></svg>
</body></html>
